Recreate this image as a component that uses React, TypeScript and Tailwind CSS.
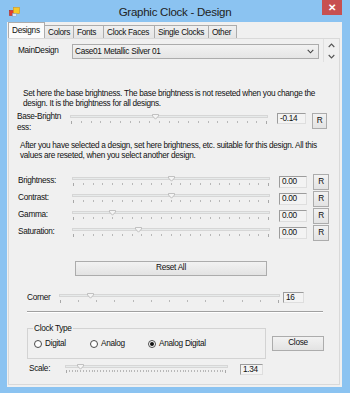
import React from "react";

const txt = "text-[8.25px] tracking-[-0.3px] text-[#111]";

function Ticks({ n, className }: { n: number; className: string }) {
  return (
    <div className={"flex justify-between px-[1px] " + className}>
      {Array.from({ length: n }, (_, i) => (
        <div
          key={i}
          className={i === 0 || i === n - 1 ? "w-px h-[3px] bg-[#a8a8a8]" : "w-px h-[2px] bg-[#b8b8b8]"}
        />
      ))}
    </div>
  );
}

// trackbar: thin channel, small pointer thumb, ticks below
function Slider({ className, thumb, ticks, tickGap = "mt-[3px]" }: { className: string; thumb: number; ticks: number; tickGap?: string }) {
  return (
    <div className={"relative shrink-0 " + className}>
      <div className="h-[3px] border border-[#d6d6d6] bg-[#e7eaea]" />
      <svg className="absolute top-[-1px]" style={{ left: thumb - 3 }} width="7" height="6" viewBox="0 0 7 6">
        <polygon points="0.5,0.5 6.5,0.5 6.5,2 3.5,5.2 0.5,2" fill="#f4f4f4" stroke="#b4b4b4" strokeWidth="0.8" />
      </svg>
      <Ticks n={ticks} className={tickGap} />
    </div>
  );
}

function ValueBox({ value, className }: { value: string; className: string }) {
  return (
    <div
      className={
        "shrink-0 h-[11px] border border-t-[#9c9c9c] border-l-[#9c9c9c] border-r-[#dedede] border-b-[#dedede] bg-[#f3f3f3] pl-[2px] leading-[9px] " +
        txt +
        " " +
        className
      }
    >
      {value}
    </div>
  );
}

function WinButton({ label, className }: { label: string; className: string }) {
  return (
    <div
      className={
        "shrink-0 flex items-center justify-center border border-[#acacac] bg-gradient-to-b from-[#f2f2f2] to-[#e3e3e3] " +
        txt +
        " " +
        className
      }
    >
      {label}
    </div>
  );
}

function Radio({ label, checked, className }: { label: string; checked?: boolean; className: string }) {
  return (
    <div className={"flex items-center shrink-0 " + className}>
      <div className="w-[8px] h-[8px] rounded-full border border-[#4a4a4a] bg-white flex items-center justify-center">
        {checked && <div className="w-[4px] h-[4px] rounded-full bg-[#111]" />}
      </div>
      <span className={"ml-[3px] leading-[11px] " + txt}>{label}</span>
    </div>
  );
}

const adjustRows = [
  { label: "Brightness:", thumb: 99 },
  { label: "Contrast:", thumb: 99 },
  { label: "Gamma:", thumb: 40 },
  { label: "Saturation:", thumb: 66 },
];

const tabs = ["Colors", "Fonts", "Clock Faces", "Single Clocks", "Other"];
const tabWidths = ["w-[29px]", "w-[30px]", "w-[51px]", "w-[54px]", "w-[28px]"];

export default function App() {
  return (
    <div className="w-[350px] h-[393px] bg-[#8bc3f1] flex flex-col font-['Liberation_Sans',Arial,sans-serif] overflow-hidden">
      {/* title bar */}
      <div className="h-[22px] shrink-0 grid grid-cols-[1fr_auto_1fr]">
        <div className="pl-[9px] pt-[7px]">
          <svg width="11" height="10" viewBox="0 0 11 10">
            <rect x="0.5" y="3.5" width="5" height="5" fill="#e23b2e" stroke="#b02a20" strokeWidth="0.6" />
            <rect x="4.5" y="0.5" width="6" height="6" fill="#f7c928" stroke="#d7961a" strokeWidth="0.6" />
            <rect x="3.5" y="6.5" width="4" height="3" fill="#dbe8f4" stroke="#7a9bbb" strokeWidth="0.5" />
          </svg>
        </div>
        <div className="pt-[5px] text-[11.5px] tracking-[-0.25px] leading-[14px] text-[#222]">Graphic Clock - Design</div>
        <div className="flex justify-end pr-[8px]">
          <div className="w-[20px] h-[15px] bg-[#c75050] flex items-center justify-center text-white text-[10px] leading-none font-bold">
            ✕
          </div>
        </div>
      </div>

      {/* client */}
      <div className="flex-1 mx-[7px] mb-[6px] mr-[8px] bg-[#f0f0f0] flex flex-col pl-[1px] pr-[2px] pb-[2px]">
        {/* tab strip */}
        <div className="h-[16px] shrink-0 flex items-end relative z-10">
          <div className={"w-[37px] h-[16px] border border-b-0 border-[#acacac] bg-[#fbfbfb] pl-[3px] pt-[2px] " + txt}>
            Designs
          </div>
          {tabs.map((t, i) => (
            <div
              key={t}
              className={
                tabWidths[i] +
                " h-[13px] border border-l-0 border-b-0 border-[#acacac] bg-gradient-to-b from-[#f0f0f0] to-[#e5e5e5] pl-[3px] pt-[1px] leading-[11px] " +
                txt
              }
            >
              {t}
            </div>
          ))}
        </div>

        {/* tab page */}
        <div className="flex-1 border border-[#d9d9d9] bg-[#f0f0f0] flex flex-col">
          {/* main design row */}
          <div className="h-[23px] flex items-start">
            <div className={"ml-[9px] w-[54px] mt-[6px] leading-[11px] " + txt}>MainDesign</div>
            <div className="mt-[5px] w-[247px] h-[15px] border border-[#acacac] bg-gradient-to-b from-[#f2f2f2] to-[#e5e5e5] flex items-center pl-[2px] pr-[4px]">
              <span className={"flex-1 leading-[11px] " + txt}>Case01 Metallic Silver 01</span>
              <svg width="7" height="5" viewBox="0 0 7 5">
                <polyline points="0.7,0.8 3.5,3.8 6.3,0.8" fill="none" stroke="#444" strokeWidth="1.1" />
              </svg>
            </div>
            <div className="ml-[4px] w-px h-[23px] bg-[#e0e0e0]" />
            <div className="ml-[4px] mt-[4px] flex flex-col gap-[6px]">
              <svg width="7" height="5" viewBox="0 0 7 5">
                <polyline points="0.7,4 3.5,1 6.3,4" fill="none" stroke="#555" strokeWidth="1.1" />
              </svg>
              <svg width="7" height="5" viewBox="0 0 7 5">
                <polyline points="0.7,1 3.5,4 6.3,1" fill="none" stroke="#555" strokeWidth="1.1" />
              </svg>
            </div>
          </div>

          <div className={"mt-[27px] pl-[14px] leading-[10px] whitespace-nowrap " + txt}>
            Set here the base brightness. The base brightness is not reseted when you change the
            <br />
            design. It is the brightness for all designs.
          </div>

          {/* base brightness */}
          <div className="mt-[3px] h-[21px] flex items-start">
            <div className={"ml-[8px] w-[53px] leading-[10.5px] " + txt}>
              Base-Brightn
              <br />
              ess:
            </div>
            <Slider className="w-[198px] mt-[3px]" thumb={85} ticks={21} />
            <ValueBox value="-0.14" className="ml-[9px] w-[29px] mt-[1px]" />
            <WinButton label="R" className="ml-[6px] w-[15px] h-[16px] mt-[1px]" />
          </div>

          <div className={"mt-[8px] pl-[11px] leading-[10px] whitespace-nowrap " + txt}>
            After you have selected a design, set here brightness, etc. suitable for this design. All this
            <br />
            values are reseted, when you select another design.
          </div>

          <div className="mt-[11px] flex flex-col">
            {adjustRows.map((r) => (
              <div key={r.label} className="h-[17px] flex items-start">
                <div className={"ml-[9px] w-[54px] leading-[17px] " + txt}>{r.label}</div>
                <Slider className="w-[198px] mt-[5px]" thumb={r.thumb} ticks={21} />
                <ValueBox value="0.00" className="ml-[9px] w-[28px] mt-[4px] h-[12px]" />
                <WinButton label="R" className="ml-[6px] w-[16px] h-[16px] mt-[2px]" />
              </div>
            ))}
          </div>

          <WinButton label="Reset All" className="mt-[21px] ml-[66px] w-[192px] h-[15px]" />

          {/* corner */}
          <div className="mt-[15px] h-[14px] flex items-start">
            <div className={"ml-[18px] w-[32px] leading-[14px] " + txt}>Corner</div>
            <Slider className="w-[221px] mt-[3px]" thumb={31} ticks={13} tickGap="mt-[3px]" />
            <ValueBox value="16" className="ml-[3px] w-[21px] mt-[1px]" />
          </div>

          <div className="mt-[6px] ml-[18px] w-[296px] h-[2px] border-t border-[#a0a0a0] border-b border-b-white" />

          {/* clock type */}
          <div className="mt-[10px] h-[36px] flex items-start">
            <fieldset className="ml-[18px] w-[239px] h-[36px] border border-[#d3d3d3] pl-[6px]">
              <legend className={"ml-[-1px] px-[1px] leading-[11px] " + txt}>Clock Type</legend>
              <div className="mt-[4px] flex items-center">
                <Radio label="Digital" className="w-[56px]" />
                <Radio label="Analog" className="w-[58px]" />
                <Radio label="Analog Digital" checked className="w-[80px]" />
              </div>
            </fieldset>
            <WinButton label="Close" className="ml-[6px] mt-[13px] w-[52px] h-[15px]" />
          </div>

          {/* scale */}
          <div className="mt-[4px] h-[12px] flex items-start">
            <div className={"ml-[20px] w-[36px] leading-[12px] " + txt}>Scale:</div>
            <Slider className="w-[163px] mt-[2px]" thumb={15} ticks={57} tickGap="mt-[2px]" />
            <ValueBox value="1.34" className="ml-[12px] w-[23px] mt-[1px]" />
          </div>
        </div>
      </div>
    </div>
  );
}
